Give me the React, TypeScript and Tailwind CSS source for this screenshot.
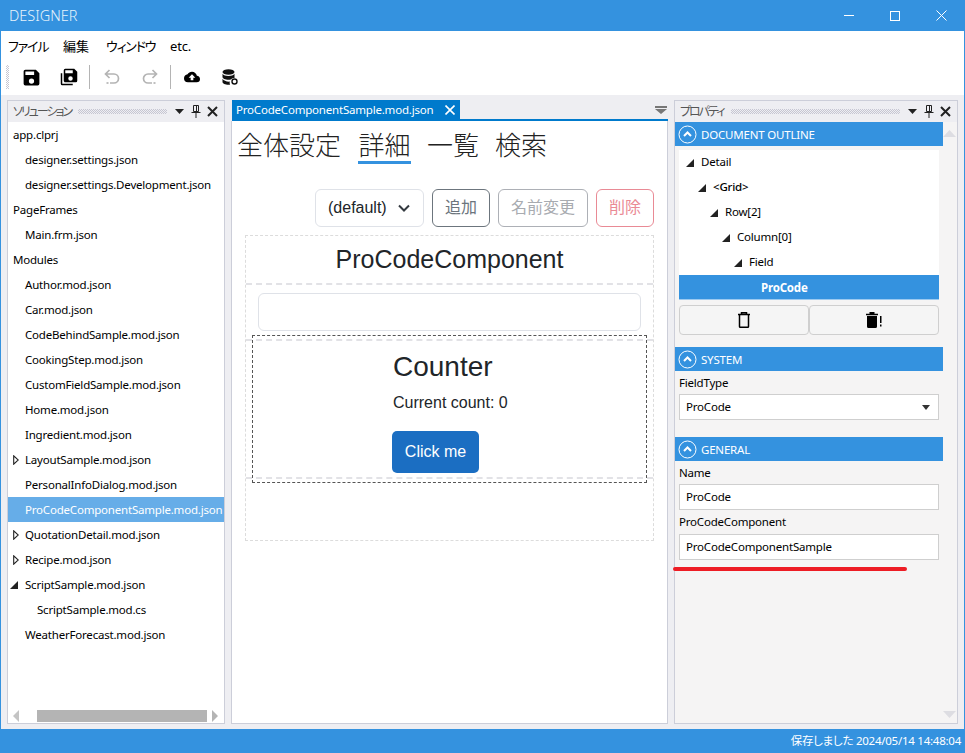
import React from "react";

const ui = "font-['Noto_Sans','Noto_Sans_CJK_JP',sans-serif]";
const web = "font-['Liberation_Sans','Noto_Sans_CJK_JP',sans-serif]";
const palt = "[font-feature-settings:'palt']";

function Mdi({ d, size = 24, color = "#000", className = "" }: { d: string; size?: number; color?: string; className?: string }) {
  return (
    <svg width={size} height={size} viewBox="0 0 24 24" className={className} fill={color}>
      <path d={d} />
    </svg>
  );
}

function Grip({ className = "" }: { className?: string }) {
  return (
    <div className={`h-[5px] flex-1 bg-[conic-gradient(#c6c6d2_25%,transparent_0_50%,#c6c6d2_0_75%,transparent_0)] bg-[length:2px_2px] ${className}`} />
  );
}

function PanelHeader({ title }: { title: string }) {
  return (
    <div className="h-[21px] flex items-center pl-[5px] pr-[6px] bg-[#eeeef2] shrink-0">
      <span className={`text-[12px] text-[#555] leading-none tracking-[-2px] ${palt}`}>{title}</span>
      <Grip className="mx-[7px]" />
      <svg width="11" height="6" viewBox="0 0 11 6"><path d="M1 0h9L5.500 5z" fill="#222" /></svg>
      <svg width="10" height="13" viewBox="0 0 10 13" className="ml-[6px]" fill="none" stroke="#222" strokeWidth="1">
        <path d="M2.500.5h5v6h-5zM5.500 1v5M.5 7.500h9M5 8v5" />
      </svg>
      <svg width="11" height="11" viewBox="0 0 11 11" className="ml-[6px]" stroke="#222" strokeWidth="2"><path d="M1 1l9 9M10 1l-9 9" /></svg>
    </div>
  );
}

function Tri({ open }: { open?: boolean }) {
  return open ? (
    <svg width="8" height="8" viewBox="0 0 8 8"><path d="M8 0v8H0z" fill="#222" /></svg>
  ) : (
    <svg width="6" height="10" viewBox="0 0 6 10"><path d="M.7.8v8.400L5.300 5z" fill="#fff" stroke="#222" strokeWidth="1.100" /></svg>
  );
}

const files: { t: string; i?: number; e?: "open" | "closed"; s?: boolean }[] = [
  { t: "app.clprj" },
  { t: "designer.settings.json", i: 1 },
  { t: "designer.settings.Development.json", i: 1 },
  { t: "PageFrames" },
  { t: "Main.frm.json", i: 1 },
  { t: "Modules" },
  { t: "Author.mod.json", i: 1 },
  { t: "Car.mod.json", i: 1 },
  { t: "CodeBehindSample.mod.json", i: 1 },
  { t: "CookingStep.mod.json", i: 1 },
  { t: "CustomFieldSample.mod.json", i: 1 },
  { t: "Home.mod.json", i: 1 },
  { t: "Ingredient.mod.json", i: 1 },
  { t: "LayoutSample.mod.json", i: 1, e: "closed" },
  { t: "PersonalInfoDialog.mod.json", i: 1 },
  { t: "ProCodeComponentSample.mod.json", i: 1, s: true },
  { t: "QuotationDetail.mod.json", i: 1, e: "closed" },
  { t: "Recipe.mod.json", i: 1, e: "closed" },
  { t: "ScriptSample.mod.json", i: 1, e: "open" },
  { t: "ScriptSample.mod.cs", i: 2 },
  { t: "WeatherForecast.mod.json", i: 1 },
];

function SectionHeader({ title }: { title: string }) {
  return (
    <div className="h-[24px] bg-[#3492df] flex items-center pl-[3px] text-white shrink-0">
      <svg width="19" height="19" viewBox="0 0 19 19" fill="none" stroke="#fff">
        <circle cx="9.500" cy="9.500" r="8.500" strokeWidth="1" />
        <path d="M6 11l3.500-3.500L13 11" strokeWidth="2" />
      </svg>
      <span className="ml-[4px] translate-y-[1px]">{title}</span>
    </div>
  );
}

function Field({ value, select }: { value: string; select?: boolean }) {
  return (
    <div className="mx-[4px] h-[26px] w-[260px] bg-white border border-[#cfcfcf] flex items-center pl-[6px] pr-[8px] text-black">
      <span className="flex-1">{value}</span>
      {select && <svg width="8" height="5" viewBox="0 0 8 5"><path d="M0 0h8L4 5z" fill="#333" /></svg>}
    </div>
  );
}

const tools = "w-[38px] flex items-center justify-center shrink-0";

export default function App() {
  return (
    <div className={`${ui} w-[965px] h-[753px] flex flex-col overflow-hidden bg-[#eeeef2] relative`}>
      {/* title bar */}
      <div className="h-[31px] bg-[#3492df] flex items-center shrink-0">
        <span className="pl-[9px] text-[14.500px] text-[#e6f2fc] font-light flex-1 leading-none">DESIGNER</span>
        <svg width="10" height="1" viewBox="0 0 10 1" className="mr-[36px]"><path d="M0 .5h10" stroke="#fff" /></svg>
        <svg width="10" height="10" viewBox="0 0 10 10" className="mr-[36px]" fill="none"><rect x=".5" y=".5" width="9" height="9" stroke="#fff" /></svg>
        <svg width="11" height="11" viewBox="0 0 11 11" className="mr-[18px]" stroke="#fff"><path d="M.5.5l10 10M10.500.5l-10 10" /></svg>
      </div>
      {/* menu */}
      <div className={`mx-[1px] h-[31px] bg-white flex items-center pl-[7px] text-[13px] text-black shrink-0 ${palt}`}>
        <span className="w-[55px] tracking-[-1.200px]">ファイル</span>
        <span className="w-[43px]">編集</span>
        <span className="w-[64px] tracking-[-1.200px]">ウィンドウ</span>
        <span className="tracking-[-0.2px]">etc.</span>
      </div>
      {/* toolbar */}
      <div className="mx-[1px] h-[33px] bg-white flex items-center shrink-0 pb-[3px]">
        <div className="ml-[5px] w-[3px] h-[24px] mr-[3px] bg-[conic-gradient(#c6c6d2_25%,transparent_0_50%,#c6c6d2_0_75%,transparent_0)] bg-[length:2px_2px]" />
        <div className={tools}>
          <Mdi size={21} d="M15,9H5V5H15M12,19A3,3 0 0,1 9,16A3,3 0 0,1 12,13A3,3 0 0,1 15,16A3,3 0 0,1 12,19M17,3H5C3.89,3 3,3.9 3,5V19A2,2 0 0,0 5,21H19A2,2 0 0,0 21,19V7L17,3Z" />
        </div>
        <div className={tools}>
          <Mdi size={18} d="M17,7V3H7V7H17M14,17A3,3 0 0,0 17,14A3,3 0 0,0 14,11A3,3 0 0,0 11,14A3,3 0 0,0 14,17M19,1L23,5V17A2,2 0 0,1 21,19H7C5.89,19 5,18.1 5,17V3A2,2 0 0,1 7,1H19M1,7H3V21H17V23H3A2,2 0 0,1 1,21V7Z" />
        </div>
        <div className="ml-[1px] w-[1px] h-[24px] bg-[#b4b4b4] shrink-0" />
        <div className={`${tools} ml-[3px]`}>
          <svg width="16" height="16" viewBox="0 0 16 16" fill="none" stroke="#b4b4b4" strokeWidth="1.700">
            <path d="M5.500 1L1.500 5l4 4M1.500 5h8.500a4.500 4.500 0 0 1 0 9H6" />
            <path d="M2.500 14h2" />
          </svg>
        </div>
        <div className={tools}>
          <svg width="16" height="16" viewBox="0 0 16 16" fill="none" stroke="#b4b4b4" strokeWidth="1.700">
            <path d="M10.500 1l4 4-4 4M14.500 5H6a4.500 4.500 0 0 0 0 9h4" />
            <path d="M11.500 14h2" />
          </svg>
        </div>
        <div className="ml-[1px] w-[1px] h-[24px] bg-[#b4b4b4] shrink-0" />
        <div className={`${tools} ml-[2px]`}>
          <Mdi size={16} d="M14,13V17H10V13H7L12,8L17,13M19.350,10.030C18.670,6.590 15.640,4 12,4C9.110,4 6.600,5.640 5.350,8.030C2.340,8.360 0,10.900 0,14A6,6 0 0,0 6,20H19A5,5 0 0,0 24,15C24,12.360 21.950,10.220 19.350,10.030Z" />
        </div>
        <div className={tools}>
          <svg width="16" height="16" viewBox="0 0 16 16">
            <ellipse cx="6.500" cy="3" rx="6" ry="2.800" fill="#111" />
            <path d="M.5 4.800v3.200c0 1.500 2.700 2.800 6 2.800.8 0 1.600-.1 2.300-.2.800-1 2-1.600 3.700-1.500V4.800c-1 1.500-3.200 2.200-6 2.200S1.500 6.300.5 4.800zM.5 9.800V13c0 1.500 2.700 2.800 6 2.800.5 0 1 0 1.500-.1-.4-1-.5-2.100-.2-3.100-3.100.2-6.200-.8-7.300-2.800z" fill="#111" />
            <circle cx="12.500" cy="12.500" r="2.500" fill="none" stroke="#111" strokeWidth="1.400" />
          </svg>
        </div>
      </div>
      {/* body */}
      <div className="flex-1 flex pt-[5px] pb-[5px] pl-[7px] pr-[7px] min-h-0">
        {/* left */}
        <div className="w-[218px] border border-[#ccced9] flex flex-col bg-white shrink-0">
          <PanelHeader title="ソリューション" />
          <div className="flex-1 overflow-hidden text-[11.500px] tracking-[-0.2px] text-black">
            {files.map((f) => (
              <div key={f.t} className={`h-[25px] flex items-center whitespace-nowrap relative ${f.s ? "bg-[#66ade8] text-white" : ""} ${f.i === 2 ? "pl-[29px]" : f.i === 1 ? "pl-[17px]" : "pl-[5px]"}`}>
                {f.e && (
                  <span className={`absolute top-0 h-full flex items-center justify-center ${f.e === "open" ? "left-[2px]" : "left-[5px]"}`}>
                    <Tri open={f.e === "open"} />
                  </span>
                )}
                {f.t}
              </div>
            ))}
          </div>
          <div className="h-[12px] mb-[1px] flex items-center pl-[5px] pr-[5px] shrink-0">
            <svg width="7" height="12" viewBox="0 0 7 12"><path d="M6 0v12L0 6z" fill="#c4c4c4" /></svg>
            <div className="ml-[17px] w-[171px] h-[12px] bg-[#b4b4b4]" />
            <svg width="7" height="12" viewBox="0 0 7 12" className="ml-[5px]"><path d="M0 0v12l6-6z" fill="#b4b4b4" /></svg>
          </div>
        </div>
        {/* center */}
        <div className="ml-[6px] w-[437px] flex flex-col shrink-0">
          <div className="h-[19px] flex items-center shrink-0 pl-[1px]">
            <div className="h-full w-[228px] bg-[#007acc] text-white text-[11.500px] tracking-[-0.2px] flex items-center pl-[4px] whitespace-nowrap">
              <span className="flex-1">ProCodeComponentSample.mod.json</span>
              <svg width="10" height="10" viewBox="0 0 10 10" className="mr-[5px]" stroke="#fff" strokeWidth="1.600"><path d="M.5.5l9 9M9.500.5l-9 9" /></svg>
            </div>
            <div className="flex-1" />
            <svg width="12" height="8" viewBox="0 0 12 8" className="mr-[1px]"><path d="M0 0h12v2H0zM0 3h12L6 8z" fill="#777" /></svg>
          </div>
          <div className="h-[2px] ml-[1px] bg-[#007acc] shrink-0" />
          <div className={`${web} flex-1 bg-white border-x border-b border-[#ccced9] px-[6px] min-h-0`}>
            <div className="flex pt-[8px] text-[26px] leading-[34px] text-[#222] font-light h-[41px]">
              <span className="-ml-[1px]">全体設定</span>
              <span className="ml-[17px] border-b-[3px] border-[#3492df] h-[35px] w-[53px] text-center">詳細</span>
              <span className="ml-[16px]">一覧</span>
              <span className="ml-[16px]">検索</span>
            </div>
            <div className="mt-[27px] flex justify-end gap-[8px] pr-[7px] text-[16px]">
              <div className="h-[38px] w-[109px] border border-[#dfe2e8] rounded-[6px] flex items-center pl-[12px] text-[#212529]">
                (default)
                <svg width="12" height="8" viewBox="0 0 12 8" className="ml-[11px]" fill="none" stroke="#343a40" strokeWidth="2"><path d="M1 1.500l5 5 5-5" /></svg>
              </div>
              <div className="h-[38px] w-[58px] border border-[#6c757d] rounded-[6px] flex items-center justify-center text-[#6c757d]">追加</div>
              <div className="h-[38px] w-[90px] border border-[#adb0b6] rounded-[6px] flex items-center justify-center text-[#a8abb0]">名前変更</div>
              <div className="h-[38px] w-[58px] border border-[#e98a95] rounded-[6px] flex items-center justify-center text-[#ea8a95]">削除</div>
            </div>
            <div className="mt-[8px] ml-[7px] mr-[7px] h-[306px] border border-dashed border-[#dcdcdc] flex flex-col relative">
              <div className="h-[49px] flex items-center justify-center text-[25px] text-[#212529] border-b-2 border-dashed border-[#e2e2e6] shrink-0">ProCodeComponent</div>
              <div className="h-[56px] px-[12px] pt-[8px] border-b-2 border-dashed border-[#e2e2e6] shrink-0">
                <div className="h-[38px] border border-[#dfe2e8] rounded-[6px]" />
              </div>
              <div className="h-[138px] border-b-2 border-dashed border-[#e2e2e6] shrink-0 pl-[147px] text-[#212529] relative">
                <div className="absolute left-[6px] right-[6px] -top-[6px] h-[148px] border border-dashed border-[#555]" />
                <div className="text-[28px] leading-[34px] pt-[9px]">Counter</div>
                <div className="text-[16px] leading-[24px] mt-[7px]">Current count: 0</div>
                <div className="mt-[16px] -ml-[1px] h-[42px] w-[87px] bg-[#1b6ec2] rounded-[5px] text-white text-[16px] flex items-center justify-center">Click me</div>
              </div>
            </div>
          </div>
        </div>
        {/* right */}
        <div className="ml-[6px] w-[284px] border border-[#ccced9] flex flex-col bg-[#f5f4f4] shrink-0 relative">
          <PanelHeader title="プロパティ" />
          <div className="w-[268px] text-[11.500px] tracking-[-0.2px] text-black flex-1">
            <SectionHeader title="DOCUMENT OUTLINE" />
            <div className="mt-[4px] mx-[4px] w-[260px] bg-white">
              {[
                ["Detail", 7],
                ["<Grid>", 19],
                ["Row[2]", 31],
                ["Column[0]", 43],
                ["Field", 55],
              ].map(([t, p]) => (
                <div key={t as string} className={`h-[25px] flex items-center ${t === "<Grid>" ? "font-medium" : ""}`} style={{ paddingLeft: p as number }}>
                  <Tri open />
                  <span className="ml-[7px] -translate-y-[1px]">{t}</span>
                </div>
              ))}
              <div className="h-[25px] bg-[#3492df] text-white font-bold flex items-center pl-[82px] border-b border-[#9dcaf0]">
                <span className="translate-y-[1px]">ProCode</span>
              </div>
            </div>
            <div className="mt-[5px] mx-[4px] w-[260px] flex h-[30px]">
              <div className="w-[130px] bg-[#f5f5f5] border border-[#cfcfcf] rounded-[4px] flex items-center justify-center">
                <svg width="12" height="16" viewBox="0 0 12 16" fill="none" stroke="#000" strokeWidth="1.500">
                  <path d="M0 2.500h12M3.500 2.500V.8h5v1.700M1.500 3v11.500a.8.8 0 0 0 .8.8h7.400a.8.8 0 0 0 .8-.8V3" />
                </svg>
              </div>
              <div className="w-[130px] bg-[#f5f5f5] border border-[#cfcfcf] rounded-[4px] flex items-center justify-center">
                <svg width="16" height="16" viewBox="0 0 16 16" fill="#000">
                  <path d="M3.500 0h5v1.800H12v1.500H0V1.800h3.500zM1 4h10v10.500a1.500 1.500 0 0 1-1.500 1.500h-7A1.500 1.500 0 0 1 1 14.500z" />
                  <path d="M14 4h1.500v7H14zM14 12.500h1.500v2H14z" />
                </svg>
              </div>
            </div>
            <div className="mt-[12px]"><SectionHeader title="SYSTEM" /></div>
            <div className="pl-[4px] h-[23px] flex items-center">FieldType</div>
            <Field value="ProCode" select />
            <div className="mt-[17px]"><SectionHeader title="GENERAL" /></div>
            <div className="pl-[4px] h-[23px] flex items-center">Name</div>
            <Field value="ProCode" />
            <div className="pl-[4px] h-[24px] flex items-center">ProCodeComponent</div>
            <Field value="ProCodeComponentSample" />
          </div>
          <svg width="13" height="7" viewBox="0 0 13 7" className="absolute right-[1px] top-[29px]"><path d="M6.500 0L13 7H0z" fill="#dddde2" /></svg>
          <svg width="13" height="7" viewBox="0 0 13 7" className="absolute right-[1px] bottom-[5px]"><path d="M6.500 7L13 0H0z" fill="#dddde2" /></svg>
        </div>
      </div>
      {/* status */}
      <div className={`h-[24px] bg-[#3492df] flex items-center justify-end pr-[4px] text-[11.500px] tracking-[-0.25px] text-white shrink-0 ${palt}`}>
        保存しました 2024/05/14 14:48:04
      </div>
      {/* red annotation */}
      <div className="absolute left-[673px] top-[567px] w-[234px] h-[4px] rounded-full bg-[#ed1c24]" />
      {/* window edge */}
      <div className="absolute left-0 top-[31px] bottom-[24px] w-[1px] bg-[#3492df]" />
      <div className="absolute right-0 top-[31px] bottom-[24px] w-[1px] bg-[#3492df]" />
    </div>
  );
}
